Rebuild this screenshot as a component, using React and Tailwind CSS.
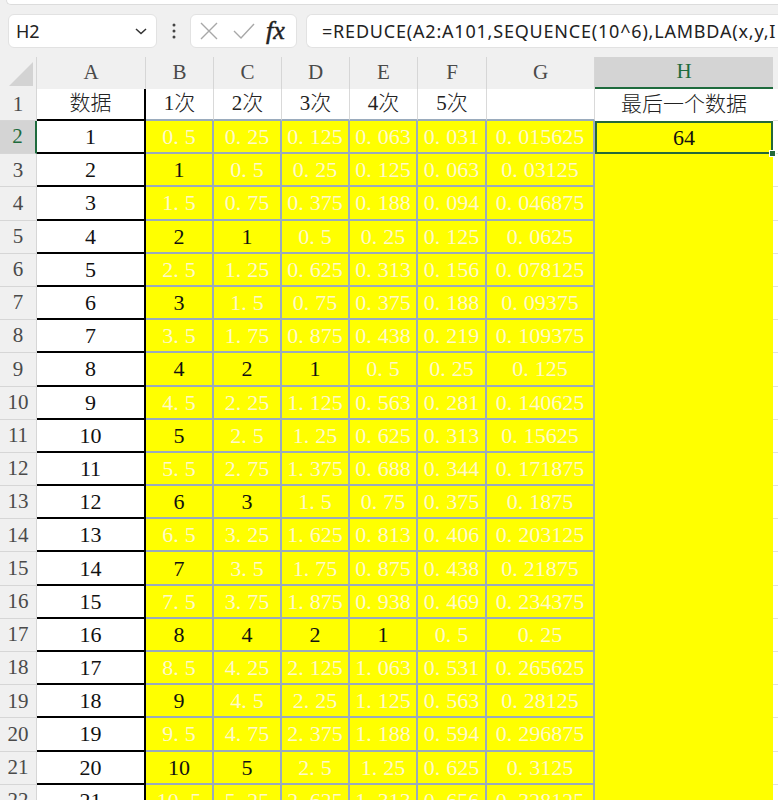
import React from 'react';

const SERIF = { fontFamily: '"Liberation Serif", "Noto Sans CJK SC", serif' };
const SANS = { fontFamily: '"Noto Sans", "Liberation Sans", sans-serif' };

function Num({ v, dec }) {
  let s = dec != null ? String(Math.round(v * Math.pow(10, dec)) / Math.pow(10, dec)) : String(v);
  const parts = s.split('.');
  if (parts.length === 1) return <span>{s}</span>;
  return (
    <span>
      {parts[0]}
      <span className="mr-[0.28em]">.</span>
      {parts[1]}
    </span>
  );
}

const rows = Array.from({ length: 21 }, (_, i) => i + 1);

function Toolbar() {
  return (
    <div className="h-[57px] bg-[#f0f0f0] relative" style={SANS}>
      <div className="ml-[6px] h-[5px] bg-white border-b border-l border-[#dcdcdc] rounded-bl-[6px]" />
      <div className="flex items-center mt-[9px] h-[34px]">
        <div className="ml-[8px] w-[149px] h-[34px] bg-white rounded-[6px] border border-[#e2e2e2] flex items-center justify-between pl-[7px] pr-[8px]">
          <span className="text-[18px] text-[#222]">H2</span>
          <svg width="14" height="10" viewBox="0 0 14 10"><path d="M2 3 L7 7.5 L12 3" fill="none" stroke="#333" strokeWidth="1.5" /></svg>
        </div>
        <div className="w-[33px] flex justify-center">
          <svg width="4" height="16" viewBox="0 0 4 16"><circle cx="2" cy="2" r="1.5" fill="#444" /><circle cx="2" cy="8" r="1.5" fill="#444" /><circle cx="2" cy="14" r="1.5" fill="#444" /></svg>
        </div>
        <div className="w-[107px] h-[34px] bg-white rounded-[6px] border border-[#e2e2e2] flex items-center">
          <svg className="ml-[7px]" width="22" height="22" viewBox="0 0 22 22"><path d="M3 3 L19 19 M19 3 L3 19" stroke="#a8a8a8" strokeWidth="1.4" fill="none" /></svg>
          <svg className="ml-[12px]" width="24" height="22" viewBox="0 0 24 22"><path d="M2 11 L9 18 L22 4" stroke="#a8a8a8" strokeWidth="1.4" fill="none" /></svg>
          <span className="ml-[10px] text-[26px] italic text-[#222] leading-none [-webkit-text-stroke:0.5px_#222]" style={{ fontFamily: '"Liberation Serif", serif' }}>fx</span>
        </div>
        <div className="ml-[9px] flex-1 h-[34px] bg-white rounded-l-[6px] border border-r-0 border-[#e2e2e2] flex items-center pl-[15px] overflow-hidden whitespace-nowrap">
          <span className="text-[18px] text-[#222] tracking-[0.8px]">=REDUCE(A2:A101,SEQUENCE(10^6),LAMBDA(x,y,I</span>
        </div>
      </div>
    </div>
  );
}

const colLetters = ['A', 'B', 'C', 'D', 'E', 'F', 'G', 'H'];
const CJK = { fontFamily: '"Liberation Serif", "Noto Sans CJK SC", serif', fontWeight: 300 };

export default function App() {
  return (
    <div className="w-[778px] h-[800px] overflow-hidden bg-white">
      <Toolbar />
      <div
        className="grid grid-cols-[37px_109px_68px_68px_68px_68px_69px_108px_178px_1fr] grid-rows-[32px_32px_repeat(21,33.2px)]"
        style={SERIF}
      >
        {/* header row */}
        <div className="bg-[#f0f0f0] border-r border-[#d6d6d6] relative">
          <svg className="absolute right-[3px] bottom-[3px]" width="24" height="24" viewBox="0 0 24 24"><path d="M24 0 L24 24 L0 24 Z" fill="#d3d3d3" /></svg>
        </div>
        {colLetters.map((c) =>
          c === 'H' ? (
            <div key={c} className="bg-[#d4d4d4] border-b-2 border-[#1e6b3d] flex items-center justify-center text-[21px] text-[#1e6b3d]">{c}</div>
          ) : (
            <div key={c} className="bg-[#f0f0f0] border-r border-[#d6d6d6] flex items-center justify-center text-[21px] text-[#4a4a4a]">{c}</div>
          )
        )}
        <div className="bg-[#f0f0f0]" />

        {/* row 1 */}
        <div className="bg-[#f0f0f0] border-r border-b border-[#d6d6d6] flex items-center justify-center text-[21px] text-[#4a4a4a]">1</div>
        <div className="bg-white border-r-2 border-b-2 border-black flex items-center justify-center text-[21px] text-[#222]" style={CJK}>数据</div>
        {['1次', '2次', '3次', '4次', '5次', ''].map((t, i) => (
          <div key={i} className="bg-white border-r border-[#d9d9d9] border-b-2 border-b-[#9aabbd] flex items-center justify-center text-[21px] text-[#222]" style={CJK}>{t}</div>
        ))}
        <div className="bg-white flex items-center justify-center text-[21px] text-[#222]" style={CJK}>最后一个数据</div>
        <div className="bg-white border-b border-[#e0e0e0]" />

        {rows.map((n) => {
          const r = n + 1;
          const sel = r === 2;
          const vals = [
            [n / 2, null],
            [n / 4, null],
            [n / 8, null],
            [n / 16, 3],
            [n / 32, 3],
            [n / 64, null],
          ];
          return (
            <React.Fragment key={r}>
              <div
                className={
                  sel
                    ? 'bg-[#d4d4d4] border-r-2 border-[#1e6b3d] border-b border-b-[#d6d6d6] flex items-center justify-center text-[21px] text-[#1e6b3d]'
                    : 'bg-[#f0f0f0] border-r border-b border-[#d6d6d6] flex items-center justify-center text-[21px] text-[#4a4a4a]'
                }
              >
                {r}
              </div>
              <div className="bg-white border-r-2 border-b-2 border-black flex items-center justify-center text-[22px] text-[#111]">{n}</div>
              {vals.map(([v, dec], i) => {
                const isInt = Number.isInteger(v);
                return (
                  <div
                    key={i}
                    className={
                      'bg-[#ffff00] border-r-2 border-b-2 border-[#9aabbd] flex items-center justify-center text-[22px] whitespace-nowrap overflow-hidden ' +
                      (isInt ? 'text-[#111]' : 'text-[#fff9cc]')
                    }
                  >
                    <Num v={v} dec={dec} />
                  </div>
                );
              })}
              {sel ? (
                <div className="bg-[#ffff00] border-2 border-[#24693a] flex items-center justify-center text-[22px] text-[#111] relative">
                  64
                  <div className="absolute right-[-5px] bottom-[-5px] w-[7px] h-[7px] bg-[#24693a] border border-white" />
                </div>
              ) : (
                <div className="bg-[#ffff00]" />
              )}
              <div className="bg-white border-b border-[#e0e0e0]" />
            </React.Fragment>
          );
        })}
      </div>
    </div>
  );
}
